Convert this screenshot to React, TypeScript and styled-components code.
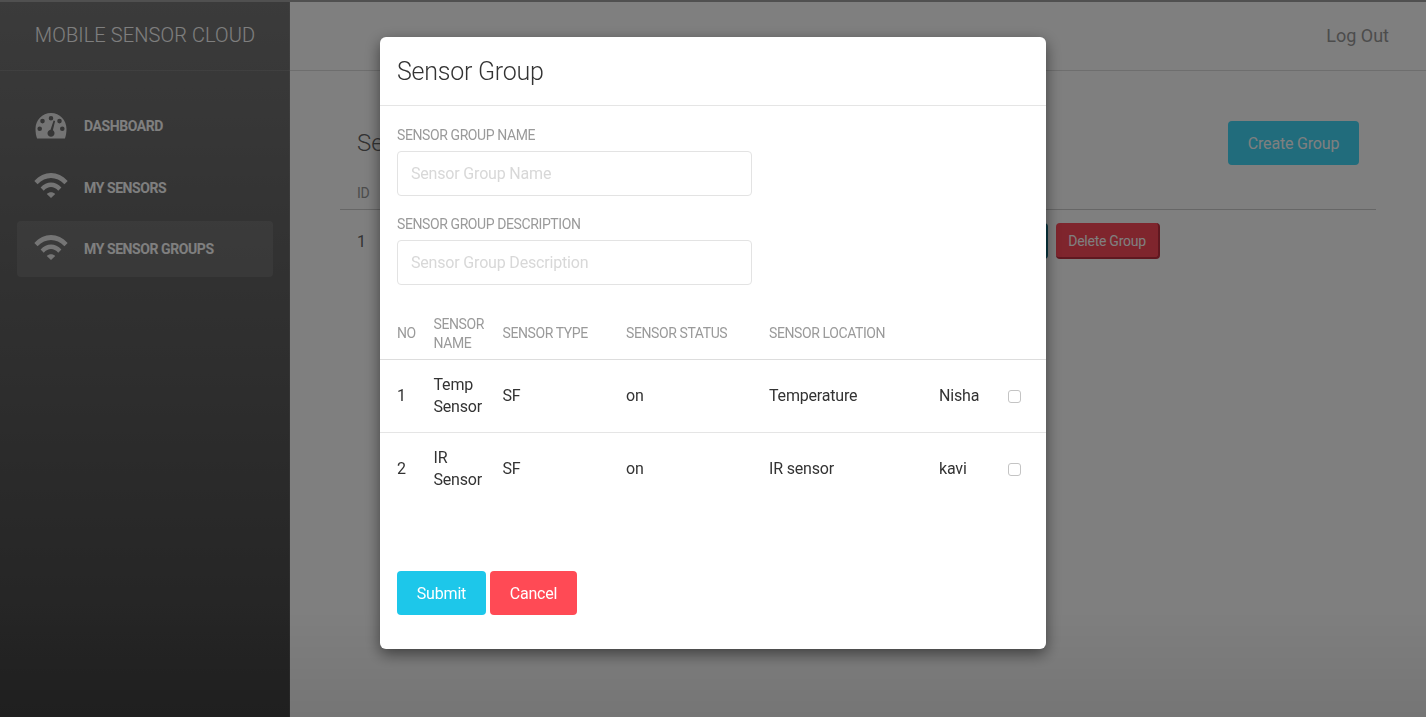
import React from "react";
import styled, { createGlobalStyle } from "styled-components";

const Global = createGlobalStyle`
  html, body { margin: 0; padding: 0; height: 100%; overflow: hidden; }
  body { font-family: Roboto, "Liberation Sans", sans-serif; color: #333; background: #fff; }
`;

const Page = styled.div`
  display: flex;
  width: 1426px;
  height: 717px;
  border-top: 2px solid #a0a0a0;
  box-sizing: border-box;
  background: #fff;
`;

const Sidebar = styled.aside`
  width: 290px;
  flex: none;
  background: linear-gradient(180deg, #767676 0%, #444 100%);
  box-shadow: inset -1px 0 rgba(255, 255, 255, 0.08);
  display: flex;
  flex-direction: column;
`;

const Brand = styled.div`
  height: 66px;
  padding-bottom: 2px;
  box-sizing: content-box;
  border-bottom: 1px solid rgba(255, 255, 255, 0.1);
  display: flex;
  align-items: center;
  justify-content: center;
  color: #fff;
  font-size: 20px;
  font-weight: 300;
  letter-spacing: 0.1px;
`;

const Nav = styled.nav`
  display: flex;
  flex-direction: column;
  gap: 5.5px;
  padding: 27px 17px 0;
`;

const NavItem = styled.div<{ $active?: boolean }>`
  height: 56px;
  border-radius: 4px;
  display: flex;
  align-items: center;
  gap: 16px;
  padding-left: 17px;
  color: #fff;
  background: ${(p) => (p.$active ? "rgba(255,255,255,0.1)" : "transparent")};
  font-size: 14px;
  font-weight: 700;
  letter-spacing: -0.42px;
`;

const IconBox = styled.span`
  width: 34px;
  height: 26px;
  margin-bottom: 4px;
  display: flex;
  align-items: center;
  justify-content: center;
  color: #fff;
  flex: none;
  opacity: 0.85;
`;

const GaugeBox = styled(IconBox)`
  margin-bottom: 0;
`;

const Main = styled.main`
  flex: 1;
  display: flex;
  flex-direction: column;
  min-width: 0;
`;

const TopBar = styled.header`
  height: 66px;
  padding: 0 37px 2px 0;
  box-sizing: content-box;
  border-bottom: 1px solid #ddd;
  display: flex;
  align-items: center;
  justify-content: flex-end;
  font-size: 18px;
  color: #999;
`;

const Content = styled.section`
  padding: 50px 50px 0;
`;

const ContentHead = styled.div`
  display: flex;
  align-items: center;
  justify-content: space-between;
  padding: 0 17px;
  height: 44px;
`;

const PageTitle = styled.h2`
  margin: 0;
  font-size: 24px;
  font-weight: 300;
  color: #666;
`;

const CreateButton = styled.button`
  width: 131px;
  height: 44px;
  border: 0;
  border-radius: 4px;
  background: #42d8f8;
  color: #fff;
  font: 400 16px Roboto, sans-serif;
  letter-spacing: -0.18px;
`;

const BackTable = styled.div`
  margin-top: 15px;
  width: 1036px;
`;

const BackHead = styled.div`
  height: 25px;
  padding: 0 0 4px 17px;
  border-bottom: 1px solid #ccc;
  font-size: 14px;
  letter-spacing: -0.4px;
  color: #999;
  display: flex;
  align-items: center;
`;

const BackRow = styled.div`
  height: 62px;
  display: flex;
  align-items: center;
  justify-content: space-between;
  padding: 0 216px 0 17px;
  font-size: 16px;
  color: #666;
`;

const RowButtons = styled.div`
  display: flex;
  gap: 8px;
`;

const SmallButton = styled.button<{ $bg: string; $edge: string }>`
  width: 104px;
  height: 36px;
  box-sizing: border-box;
  padding: 2px 0 0;
  border: 0;
  border-bottom: 2px solid ${(p) => p.$edge};
  border-right: 2px solid ${(p) => p.$edge};
  border-radius: 4px;
  background: ${(p) => p.$bg};
  color: #fff;
  font: 400 14px Roboto, sans-serif;
  letter-spacing: -0.25px;
`;

const Backdrop = styled.div`
  position: fixed;
  inset: 0;
  background: linear-gradient(180deg, rgba(0, 0, 0, 0.5) 0%, rgba(0, 0, 0, 0.5) 85%, rgba(0, 0, 0, 0.54) 100%);
`;

const Modal = styled.div`
  position: fixed;
  left: 380px;
  top: 37px;
  width: 666px;
  height: 612px;
  background: #fff;
  border-radius: 6px;
  box-shadow: 0 5px 15px rgba(0, 0, 0, 0.5);
  display: flex;
  flex-direction: column;
`;

const ModalHead = styled.div`
  height: 69px;
  box-sizing: border-box;
  flex: none;
  border-bottom: 1px solid #e5e5e5;
  display: flex;
  align-items: center;
  padding-left: 17px;
`;

const ModalTitle = styled.h4`
  margin: 0;
  font-size: 25px;
  font-weight: 300;
  letter-spacing: -0.25px;
  color: #333;
`;

const ModalBody = styled.div`
  padding: 19px 0 0;
  display: flex;
  flex-direction: column;
`;

const Field = styled.div`
  padding: 0 17px;
  margin-bottom: 18.5px;
  display: flex;
  flex-direction: column;
`;

const Label = styled.label`
  font-size: 14px;
  letter-spacing: -0.4px;
  line-height: 20px;
  color: #9a9a9a;
  margin-bottom: 6px;
`;

const Input = styled.input`
  width: 355px;
  height: 44.5px;
  box-sizing: border-box;
  border: 1px solid #e3e3e3;
  border-radius: 4px;
  padding: 0 13px;
  font: 400 16px Roboto, sans-serif;
  letter-spacing: -0.18px;
  &::placeholder { color: #d8d8d8; opacity: 1; }
`;

const SensorTable = styled.div`
  margin-top: 3.5px;
`;

const Grid = styled.div<{ $head?: boolean }>`
  display: grid;
  grid-template-columns: 36.5px 69px 123.5px 143px 170px 69px 1fr;
  padding: ${(p) => (p.$head ? "2px" : "0")} 0 0 17px;
  align-items: center;
  height: ${(p) => (p.$head ? "50px" : "72px")};
  border-bottom: 1px solid ${(p) => (p.$head ? "#ddd" : "#e5e5e5")};
  font-size: ${(p) => (p.$head ? "14px" : "16px")};
  letter-spacing: ${(p) => (p.$head ? "-0.4px" : "-0.18px")};
  line-height: ${(p) => (p.$head ? "19px" : "22px")};
  color: ${(p) => (p.$head ? "#9a9a9a" : "#333")};
  &:last-child { border-bottom: 0; }
`;

const Cell = styled.span`
  padding-right: 8px;
`;

const Check = styled.input.attrs({ type: "checkbox" })`
  appearance: none;
  width: 13px;
  height: 13px;
  margin: 1px 0 0;
  border: 1px solid #c4c4c4;
  border-radius: 3px;
  background: #fff;
`;

const Actions = styled.div`
  display: flex;
  gap: 4px;
  padding: 66px 17px 0;
`;

const ActionButton = styled.button<{ $w: number; $bg: string }>`
  width: ${(p) => p.$w}px;
  height: 44px;
  padding: 2px 0 0;
  border: 0;
  border-radius: 4px;
  background: ${(p) => p.$bg};
  color: #fff;
  font: 400 16px Roboto, sans-serif;
  letter-spacing: -0.18px;
`;

const Gauge = () => (
  <svg width="32" height="26" viewBox="0 0 32 26" fill="currentColor">
    <path fillRule="evenodd" d="M16 0C7.200 0 .5 7 .5 16c0 3.500.6 7 1.600 9.600h27.800c1-2.600 1.600-6.100 1.600-9.600C31.500 7 24.800 0 16 0zM16 3a2.300 2.300 0 1 1 0 4.600A2.300 2.300 0 0 1 16 3zM7.500 5.800a2.300 2.300 0 1 1 0 4.600 2.300 2.300 0 0 1 0-4.600zM24.500 5.800a2.300 2.300 0 1 1 0 4.600 2.300 2.300 0 0 1 0-4.600zM4.700 13.500a2.300 2.300 0 1 1 0 4.600 2.300 2.300 0 0 1 0-4.600zM27.300 13.500a2.300 2.300 0 1 1 0 4.600 2.300 2.300 0 0 1 0-4.600zM18.600 7.500l1.500.5-2.200 9.300c1 .7 1.600 1.800 1.600 3 0 2-1.600 3.500-3.500 3.500s-3.500-1.500-3.500-3.500c0-1.800 1.300-3.300 3-3.500z" />
  </svg>
);

const Wifi = () => (
  <svg width="34" height="25" viewBox="0 0 34 25.500" fill="currentColor">
    <path d="M0 8.200C9.500-2.700 24.500-2.700 34 8.200l-3.300 3.400C22.500 3 11.500 3 3.300 11.600z" />
    <path d="M6.400 14.800C12.500 7.900 21.500 7.900 27.600 14.800l-3.200 3.300C20 13 14 13 9.600 18.100z" />
    <path d="M12.700 21.400C15 19 19 19 21.300 21.400L17 25.500z" />
  </svg>
);

const rows = [
  ["1", "Temp Sensor", "SF", "on", "Temperature", "Nisha"],
  ["2", "IR Sensor", "SF", "on", "IR sensor", "kavi"],
];

export default function App() {
  return (
    <>
      <Global />
      <Page>
        <Sidebar>
          <Brand>MOBILE SENSOR CLOUD</Brand>
          <Nav>
            <NavItem><GaugeBox><Gauge /></GaugeBox>DASHBOARD</NavItem>
            <NavItem><IconBox><Wifi /></IconBox>MY SENSORS</NavItem>
            <NavItem $active><IconBox><Wifi /></IconBox>MY SENSOR GROUPS</NavItem>
          </Nav>
        </Sidebar>
        <Main>
          <TopBar>Log Out</TopBar>
          <Content>
            <ContentHead>
              <PageTitle>Sensor Groups</PageTitle>
              <CreateButton>Create Group</CreateButton>
            </ContentHead>
            <BackTable>
              <BackHead>ID</BackHead>
              <BackRow>
                <span>1</span>
                <RowButtons>
                  <SmallButton $bg="#1dc7ea" $edge="#107084" aria-label="Edit Group" />
                  <SmallButton $bg="#ff4a5a" $edge="#be3040">Delete Group</SmallButton>
                </RowButtons>
              </BackRow>
            </BackTable>
          </Content>
        </Main>
      </Page>
      <Backdrop />
      <Modal>
        <ModalHead><ModalTitle>Sensor Group</ModalTitle></ModalHead>
        <ModalBody>
          <Field>
            <Label>SENSOR GROUP NAME</Label>
            <Input placeholder="Sensor Group Name" />
          </Field>
          <Field>
            <Label>SENSOR GROUP DESCRIPTION</Label>
            <Input placeholder="Sensor Group Description" />
          </Field>
          <SensorTable>
            <Grid $head>
              <Cell>NO</Cell><Cell>SENSOR NAME</Cell><Cell>SENSOR TYPE</Cell><Cell>SENSOR STATUS</Cell><Cell>SENSOR LOCATION</Cell><Cell /><Cell />
            </Grid>
            {rows.map((r) => (
              <Grid key={r[0]}>
                {r.map((c, i) => <Cell key={i}>{c}</Cell>)}
                <Check />
              </Grid>
            ))}
          </SensorTable>
          <Actions>
            <ActionButton $w={89} $bg="#1dc7ea">Submit</ActionButton>
            <ActionButton $w={87} $bg="#ff4a55">Cancel</ActionButton>
          </Actions>
        </ModalBody>
      </Modal>
    </>
  );
}
